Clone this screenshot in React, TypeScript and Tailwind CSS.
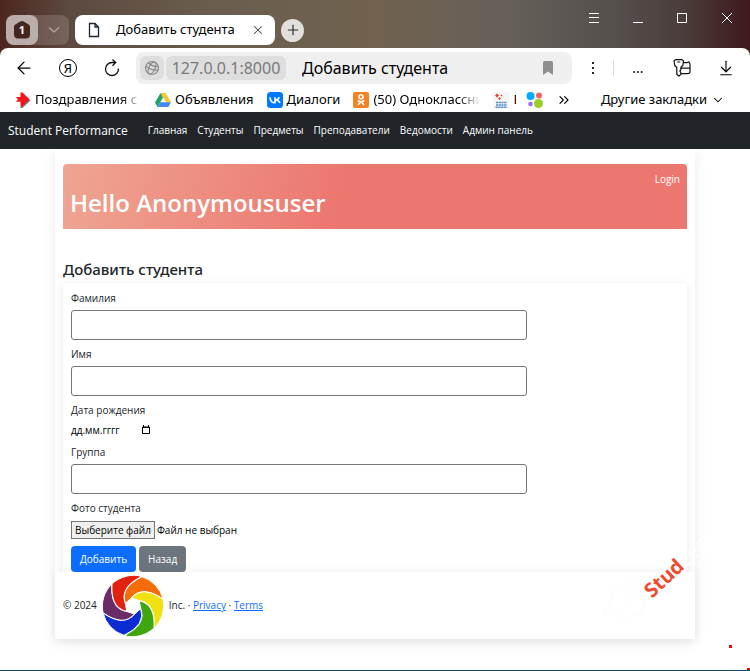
import type { ReactNode } from "react";
import {
  ArrowLeft,
  ArrowDownToLine,
  ChevronDown,
  ChevronsRight,
  Plus,
  X,
} from "lucide-react";

const navLinks = [
  "Главная",
  "Студенты",
  "Предметы",
  "Преподаватели",
  "Ведомости",
  "Админ панель",
];

/** Petals of the footer logo, clockwise from the top right one. */
const petals = [
  { color: "#f66c0a", turn: 0 },
  { color: "#efe112", turn: 60 },
  { color: "#3fa60e", turn: 120 },
  { color: "#0a2cd2", turn: 180 },
  { color: "#6b2b67", turn: 240 },
  { color: "#e0220f", turn: 300 },
];

export default function App() {
  return (
    <div className="relative overflow-hidden border-b border-[#0b506c] bg-white font-['Open_Sans','Noto_Sans',sans-serif] text-black">
      <BrowserChrome />
      <NavBar />
      <main className="relative mx-auto flex max-w-[640px] flex-col shadow-[0_4px_12px_rgba(0,0,0,0.09)]">
        <div className="flex flex-col px-2 pt-[15px]">
          <Banner />
          <h2 className="mt-7 mb-0.5 font-['Noto_Sans',sans-serif] text-[15px] leading-6 font-medium text-[#212529]">
            Добавить студента
          </h2>
          <StudentForm />
        </div>
        <Footer />
        <Watermark />
      </main>
      <div className="h-[31px]" />
      <span className="absolute right-[18px] bottom-[22px] size-[3px] bg-[#ff0000]" />
      <span className="absolute right-0 -bottom-px size-[3px] bg-[#ff0000]" />
    </div>
  );
}

function BrowserChrome() {
  return (
    <header className="bg-[linear-gradient(90deg,#4c261f_0%,#5c493f_9%,#6a5d4e_28%,#71624f_50%,#66605a_68%,#554f4d_82%,#4a3d3b_91%,#40191b_100%)] font-['Noto_Sans',sans-serif]">
      <div className="flex h-12 justify-between pl-1.5">
        <div className="flex items-center pt-3">
          <div className="flex h-[30px] w-[63px] rounded-lg bg-white/15">
            <button
              type="button"
              aria-label="Группы вкладок"
              className="grid w-8 place-items-center rounded-lg bg-[#bbaeaa]"
            >
              <svg viewBox="0 0 18 18" className="size-[18px]">
                <path
                  d="M7.3.6a3.4 3.4 0 0 1 3.4 0l5 2.8A2.6 2.6 0 0 1 17 5.600V13.500A4 4 0 0 1 13 17.500H5A4 4 0 0 1 1 13.500V5.600A2.600 2.600 0 0 1 2.300 3.400Z"
                  fill="#43271f"
                />
                <text
                  x="9"
                  y="13"
                  textAnchor="middle"
                  fontSize="11"
                  fontWeight="700"
                  fill="#fff"
                >
                  1
                </text>
              </svg>
            </button>
            <button
              type="button"
              aria-label="Список вкладок"
              className="grid flex-1 place-items-center text-[#b5a9a3]"
            >
              <svg viewBox="0 0 12 8" className="h-2 w-3">
                <path
                  d="M1 1.500L6 6L11 1.500"
                  fill="none"
                  stroke="currentColor"
                  strokeWidth="1.300"
                />
              </svg>
            </button>
          </div>
          <div className="ml-1.5 flex h-[30px] w-[200px] items-center rounded-lg bg-white pr-2.5 pl-3">
            <svg viewBox="0 0 14 16" className="h-4 w-3.5 shrink-0">
              <path
                d="M2.500 1.500H8L11.500 5V14.500H2.500ZM8 1.500V5H11.500"
                fill="none"
                stroke="#1c2733"
                strokeWidth="1.300"
              />
            </svg>
            <span className="ml-[15px] text-[13px] whitespace-nowrap">
              Добавить студента
            </span>
            <button type="button" aria-label="Закрыть" className="ml-auto">
              <X size={14} strokeWidth={1.8} color="#444c57" />
            </button>
          </div>
          <button
            type="button"
            aria-label="Новая вкладка"
            className="ml-1.5 grid size-[23px] place-items-center rounded-full bg-[#e2dfdc]"
          >
            <Plus size={16} strokeWidth={1.8} color="#2f3134" />
          </button>
        </div>
        <div className="flex h-9 text-white">
          <WindowButton label="Меню">
            <path d="M1 1.500H11M1 5.500H11M1 10.500H11" />
          </WindowButton>
          <WindowButton label="Свернуть">
            <path d="M1 10.500H11" />
          </WindowButton>
          <WindowButton label="Развернуть">
            <path d="M1.500 1.500H10.500V10.500H1.500Z" />
          </WindowButton>
          <WindowButton label="Закрыть окно">
            <path d="M1 1L11 11M11 1L1 11" />
          </WindowButton>
        </div>
      </div>
      <div className="rounded-t-lg bg-white">
        <Toolbar />
        <Bookmarks />
      </div>
    </header>
  );
}

function WindowButton({
  label,
  children,
}: {
  label: string;
  children: ReactNode;
}) {
  return (
    <button
      type="button"
      aria-label={label}
      className="grid w-11 place-items-center last:w-[46px]"
    >
      <svg
        viewBox="0 0 12 12"
        className="size-3"
        fill="none"
        stroke="currentColor"
      >
        {children}
      </svg>
    </button>
  );
}

function Toolbar() {
  return (
    <div className="flex h-10 items-center pl-0.5">
      <button
        type="button"
        aria-label="Назад"
        className="grid w-11 place-items-center"
      >
        <ArrowLeft size={20} strokeWidth={1.5} />
      </button>
      <button
        type="button"
        aria-label="Яндекс"
        className="grid w-11 place-items-center"
      >
        <span className="grid size-[18px] place-items-center rounded-full border border-black text-[13px] leading-none">
          Я
        </span>
      </button>
      <button
        type="button"
        aria-label="Обновить"
        className="grid w-11 place-items-center"
      >
        <svg viewBox="0 0 18 18" className="size-[18px]">
          <path
            d="M15.500 9.500A6.500 6.500 0 1 1 9 3.500H12.500M9.500.500L12.700 3.500L9.500 6.700"
            fill="none"
            stroke="#111"
            strokeWidth="1.300"
          />
        </svg>
      </button>
      <div className="ml-0.5 flex h-8 min-w-0 flex-1 items-center rounded-lg bg-[#efefef] pr-[18px] pl-1">
        <span className="grid size-6 place-items-center rounded-md bg-[#dedede]">
          <svg viewBox="0 0 16 16" className="size-4">
            <g fill="none" stroke="#8b8b8b" strokeWidth="1.200">
              <circle cx="8" cy="8" r="6.500" />
              <ellipse
                cx="8"
                cy="8"
                rx="3"
                ry="6.500"
                transform="rotate(25 8 8)"
              />
              <path d="M2 6.200C6 9.500 10 10.500 14 10M4.500 3C7.500 5.800 11 7 14.200 6.500" />
            </g>
          </svg>
        </span>
        <span className="ml-0.5 w-[120px] rounded-md bg-[#dedede] text-center text-[16px] leading-6 text-[#7a7a7a]">
          127.0.0.1:8000
        </span>
        <input
          type="text"
          aria-label="Адресная строка"
          defaultValue="Добавить студента"
          className="ml-4 min-w-0 flex-1 bg-transparent text-[16px] leading-6 outline-none"
        />
        <svg viewBox="0 0 12 14" className="h-3.5 w-3">
          <path
            d="M1 1.500A1.500 1.500 0 0 1 2.500 0H9.500A1.500 1.500 0 0 1 11 1.500V14L6 10.500L1 14Z"
            fill="#8e8e8e"
          />
        </svg>
      </div>
      <div className="flex h-4 w-[42px] items-center justify-center border-r border-[#dcdcdc]">
        <svg viewBox="0 0 2 14" className="h-3.5 w-0.5">
          <path d="M0 1H2V3H0ZM0 6H2V8H0ZM0 11H2V13H0Z" fill="#222" />
        </svg>
      </div>
      <button
        type="button"
        aria-label="Расширения"
        className="w-12 text-center text-[14px] leading-6"
      >
        ...
      </button>
      <button
        type="button"
        aria-label="Пароли"
        className="grid w-10 place-items-center"
      >
        <svg viewBox="0 0 18 18" className="size-[18px]">
          <g
            fill="none"
            stroke="#111"
            strokeWidth="1.200"
            strokeLinejoin="round"
          >
            <path d="M1 2L2.500.600H9L10.500 2L9.800 6.500L7.800 8.500V11L6.800 12L7.800 13.500V15.300L6 17.200L3.800 15.300V8.500L1.800 6.500ZM4.200 3H7.200" />
            <path d="M10.300 3.700H14L15.800 2.900L17 5V12.500A2.200 2.200 0 0 1 14.800 14.700H8M8 9.200H17" />
          </g>
        </svg>
      </button>
      <button
        type="button"
        aria-label="Загрузки"
        className="grid w-12 place-items-center"
      >
        <ArrowDownToLine size={18} strokeWidth={1.5} />
      </button>
    </div>
  );
}

function Bookmarks() {
  return (
    <div className="flex h-6 items-center pl-[15px] text-[13px] whitespace-nowrap">
      <Bookmark label="Поздравления с д" faded>
        <svg viewBox="0 0 16 16" className="size-4">
          <path d="M5.500 14V16H7.500L15.500 8.500L13.500 7Z" fill="#777" />
          <path
            d="M1 5H5.500V.500H7.500L14.500 7.300L7.500 14.200H5.500V9.800H1L3 7.500Z"
            fill="#f5141c"
          />
        </svg>
      </Bookmark>
      <Bookmark label="Объявления">
        <svg viewBox="0 0 16 16" className="size-4">
          <path d="M5.500 1H10.500L16 10.300H10.900Z" fill="#fbc52d" />
          <path d="M5.500 1L0 10.500L2.600 15L8 5.400Z" fill="#1fa463" />
          <path d="M5.300 10.300H16L13.400 15H2.600Z" fill="#4688f4" />
        </svg>
      </Bookmark>
      <Bookmark label="Диалоги">
        <svg viewBox="0 0 16 16" className="size-4">
          <rect width="16" height="16" rx="3.500" fill="#0077ff" />
          <path
            d="M3 5.200C3.200 8.800 5 10.800 8 10.800V5.200M8 8C10 8 11.500 7 12.300 5.200M8 8C10.500 8 12.200 9 13 10.900"
            fill="none"
            stroke="#fff"
            strokeWidth="1.600"
          />
        </svg>
      </Bookmark>
      <Bookmark label="(50) Одноклассни" faded>
        <svg viewBox="0 0 16 16" className="size-4">
          <rect width="16" height="16" rx="2" fill="#f58220" />
          <g fill="none" stroke="#fff" strokeWidth="1.600">
            <circle cx="8" cy="4.700" r="2" />
            <path d="M4.800 8.500C6.800 10 9.200 10 11.200 8.500M8 9.500L5 13M8 9.500L11 13" />
          </g>
        </svg>
      </Bookmark>
      <a href="#rabota" className="flex items-center gap-1">
        <svg viewBox="0 0 16 16" className="size-4">
          <rect width="16" height="16" fill="#f6f6f6" />
          <path
            d="M2 3.500L4 1.500L6 3.500L4 5.500ZM5 6.500L6.500 5L8 6.500L6.500 8ZM7.500 3.500L8.500 2.500L9.500 3.500L8.500 4.500Z"
            fill="#ee3f2c"
          />
          <path
            d="M3 10.500H14M3 13H14M2.500 15.200H14"
            stroke="#5a8cc8"
            strokeWidth="1.600"
            strokeDasharray="2.200 .500"
          />
        </svg>
        <span className="w-[3px] overflow-hidden">Е</span>
      </a>
      <a href="#apps" aria-label="Сервисы" className="ml-2.5">
        <svg viewBox="0 0 18 16" className="h-4 w-[18px]">
          <circle cx="4.500" cy="4" r="4" fill="#00aaff" />
          <circle cx="13" cy="3.500" r="3" fill="#ff6163" />
          <circle cx="4.500" cy="12" r="2.300" fill="#a169f7" />
          <circle cx="12.500" cy="11.500" r="4.500" fill="#97cf26" />
        </svg>
      </a>
      <button type="button" aria-label="Ещё закладки" className="ml-3">
        <ChevronsRight size={16} strokeWidth={1.7} />
      </button>
      <button type="button" className="mr-[25px] ml-auto flex items-center gap-1">
        Другие закладки
        <ChevronDown size={14} strokeWidth={1.8} />
      </button>
    </div>
  );
}

function Bookmark({
  label,
  faded,
  children,
}: {
  label: string;
  faded?: boolean;
  children: ReactNode;
}) {
  return (
    <a href="#bookmark" className="mr-[13px] flex shrink-0 items-center gap-1">
      {children}
      <span
        className={
          faded
            ? "w-[107px] [mask-image:linear-gradient(90deg,#000_80%,transparent)]"
            : ""
        }
      >
        {label}
      </span>
    </a>
  );
}

function NavBar() {
  return (
    <nav className="relative z-10 flex h-[37px] items-center bg-[#212529] px-2 text-white">
      <a href="#home" className="text-[12px]">
        Student Performance
      </a>
      <div className="ml-5 flex gap-2.5 text-[10px]">
        {navLinks.map((link) => (
          <a key={link} href="#nav">
            {link}
          </a>
        ))}
      </div>
    </nav>
  );
}

function Banner() {
  return (
    <div className="flex h-[65px] justify-between rounded-t bg-[linear-gradient(100deg,#eea592_0%,#ec776f_45%)] px-[7px] text-white">
      <h1 className="self-end pb-[9px] text-[24px] leading-[34px] font-semibold">
        Hello Anonymoususer
      </h1>
      <a href="#login" className="pt-[7px] text-[10px] leading-4">
        Login
      </a>
    </div>
  );
}

function StudentForm() {
  return (
    <form className="flex flex-col gap-1.5 px-2 pt-[7px] text-[10px] shadow-[0_2px_8px_rgba(0,0,0,0.1)]">
      <TextField id="surname" label="Фамилия" />
      <TextField id="name" label="Имя" />
      <div className="flex flex-col gap-1">
        <label htmlFor="birthday" className="leading-4 text-[#212529]">
          Дата рождения
        </label>
        <div className="flex h-4 items-center">
          <input
            id="birthday"
            type="text"
            placeholder="дд.мм.гггг"
            className="w-[70px] leading-4 outline-none placeholder:text-black"
          />
          <svg viewBox="0 0 10 10" className="size-2.5">
            <path
              d="M1.500 2H8.500V8.500H1.500ZM1 2.500H9M2.500 0V2M7.500 0V2"
              fill="none"
              stroke="#000"
            />
          </svg>
        </div>
      </div>
      <TextField id="group" label="Группа" />
      <div className="flex flex-col gap-1">
        <span className="leading-4 text-[#212529]">Фото студента</span>
        <div className="flex h-5 items-center gap-0.5">
          <input id="photo" type="file" className="sr-only" />
          <label
            htmlFor="photo"
            className="border border-[#767676] bg-[#efefef] px-[3px] leading-4"
          >
            Выберите файл
          </label>
          <span>Файл не выбран</span>
        </div>
      </div>
      <div className="flex gap-[3px] text-[10px] leading-[26px] text-white">
        <button type="submit" className="rounded bg-[#0d6efd] px-[9px]">
          Добавить
        </button>
        <button type="button" className="rounded bg-[#6c757d] px-[9px]">
          Назад
        </button>
      </div>
    </form>
  );
}

function TextField({ id, label }: { id: string; label: string }) {
  return (
    <div className="flex flex-col gap-1">
      <label htmlFor={id} className="leading-4 text-[#212529]">
        {label}
      </label>
      <input
        id={id}
        type="text"
        className="h-[30px] w-3/4 rounded-[3px] border border-[#767676] bg-white px-2 outline-none"
      />
    </div>
  );
}

function Footer() {
  return (
    <footer className="relative flex h-[67px] items-center bg-white px-2 text-[10px] text-[#212529] shadow-[0_0_8px_rgba(0,0,0,0.06)]">
      <span>© 2024</span>
      <svg viewBox="-93 -93 186 186" className="mx-[5px] size-[62px]">
        {petals.map(({ color, turn }) => (
          <path
            key={color}
            d="M27 -88A95 95 0 0 1 90 -21Q28 -63 -5 -24L-23 -8Q-40 -56 27 -88Z"
            transform={`rotate(${turn})`}
            fill={color}
            stroke="#fff"
            strokeWidth="3"
          />
        ))}
      </svg>
      <p>
        Inc. ·{" "}
        <a href="#privacy" className="text-[#0d6efd] underline">
          Privacy
        </a>{" "}
        ·{" "}
        <a href="#terms" className="text-[#0d6efd] underline">
          Terms
        </a>
      </p>
    </footer>
  );
}

function Watermark() {
  return (
    <div className="pointer-events-none absolute right-[-38px] bottom-[67px]">
      <p className="-rotate-43 text-[20px] leading-6 font-bold text-[#ee4a2f]">
        Stud<span className="font-normal text-white">Learn</span>
      </p>
      <svg
        viewBox="0 0 44 42"
        className="absolute top-8 -left-8 h-[42px] w-11"
        fill="none"
        stroke="#fbfbfb"
      >
        <path d="M1 36L14 8L32 2L36 6L42 20L40 32L24 40L12 32ZM26 24L34 8" />
      </svg>
    </div>
  );
}
